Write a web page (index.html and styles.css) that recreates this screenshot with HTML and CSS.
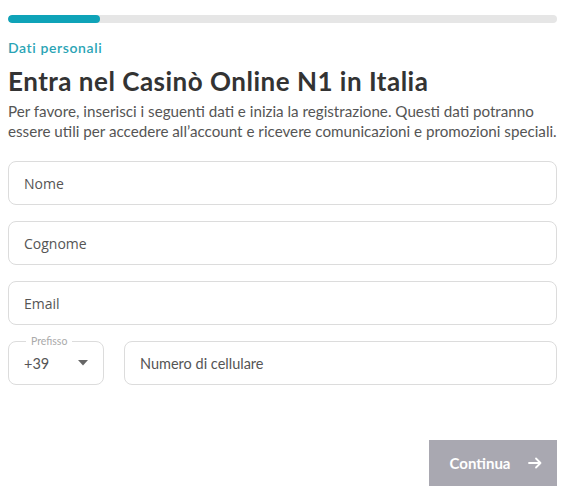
FILE: index.html
```html
<!DOCTYPE html>
<html lang="it">
<head>
<meta charset="utf-8">
<link rel="stylesheet" href="styles.css">
</head>
<body>
<div class="page">
  <div class="progress"><div class="progress-fill" style="width:92px"></div></div>
  <div class="step">Dati personali</div>
  <h1 class="title">Entra nel Casinò Online N1 in Italia</h1>
  <p class="intro">Per favore, inserisci i seguenti dati e inizia la registrazione. Questi dati potranno essere utili per accedere all’account e ricevere comunicazioni e promozioni speciali.</p>
  <form class="form">
    <div class="field"><span class="placeholder">Nome</span></div>
    <div class="field"><span class="placeholder">Cognome</span></div>
    <div class="field"><span class="placeholder">Email</span></div>
    <div class="phone-row">
      <fieldset class="prefix">
        <legend class="prefix-label">Prefisso</legend>
        <span class="prefix-value">+39</span>
        <svg class="caret" width="10" height="6" viewBox="0 0 10 6"><path d="M0 0 L10 0 L5 5.5 Z" fill="#666"/></svg>
      </fieldset>
      <div class="field phone"><span class="placeholder alt">Numero di cellulare</span></div>
    </div>
  </form>
  <div class="actions">
    <button type="button" class="btn">Continua <span class="arrow">
      <svg width="14" height="12" viewBox="0 0 14 12"><path d="M1 6 H12.5 M8 1.5 L12.5 6 L8 10.5" fill="none" stroke="#fff" stroke-width="1.8" stroke-linecap="round" stroke-linejoin="round"/></svg>
    </span></button>
  </div>
</div>
</body>
</html>
```
FILE: styles.css
```css
* { box-sizing: border-box; }
html, body { margin: 0; padding: 0; background: #fff; }
body { font-family: "Lato", "Open Sans", sans-serif; color: #333; }
.page { width: 549px; margin-left: 8px; padding-top: 15px; }
.progress { height: 8px; background: #e6e6e6; border-radius: 4px; overflow: hidden; }
.progress-fill { height: 100%; background: #0fa3b8; border-radius: 4px; }
.step { margin-top: 17px; font-size: 14px; letter-spacing: 0.6px; color: #2aa4b5; font-weight: 600; line-height: 16px; }
.title { margin: 10px 0 0; font-size: 26px; font-weight: 700; color: #333; line-height: 30px; letter-spacing: 0.5px; }
.intro { margin: 5px 0 0; font-size: 15.2px; line-height: 20px; color: #555; }
.form { margin-top: 20px; display: flex; flex-direction: column; gap: 16px; }
.field { height: 44px; border: 1px solid #dcdcdc; border-radius: 8px; display: flex; align-items: center; padding: 0 15px; }
.placeholder { font-family: "Open Sans", sans-serif; font-size: 14px; color: #555; }
.placeholder.alt { font-family: "Lato", sans-serif; font-size: 14.5px; }
.phone-row { display: flex; gap: 20px; }
.prefix { width: 96px; height: 44px; margin: 0; border: 1px solid #dcdcdc; border-radius: 8px; padding: 0 15px 0 15px; display: flex; align-items: center; justify-content: space-between; position: relative; }
.prefix-label { position: absolute; top: -7px; left: 17px; padding: 0 5px; background: #fff; font-size: 10.5px; color: #aaa; line-height: 12px; }
.prefix-value { font-size: 14.5px; color: #555; margin-top: 1px; }
.phone { flex: 1; }
.actions { display: flex; justify-content: flex-end; margin-top: 55px; }
.btn { width: 128px; height: 46px; border: none; background: #a9a8b1; color: #fff; font-family: "Lato", sans-serif; font-weight: 700; font-size: 15px; display: flex; align-items: center; justify-content: center; gap: 18px; padding: 0 0 0 6px; }
.arrow { display: flex; }
```
